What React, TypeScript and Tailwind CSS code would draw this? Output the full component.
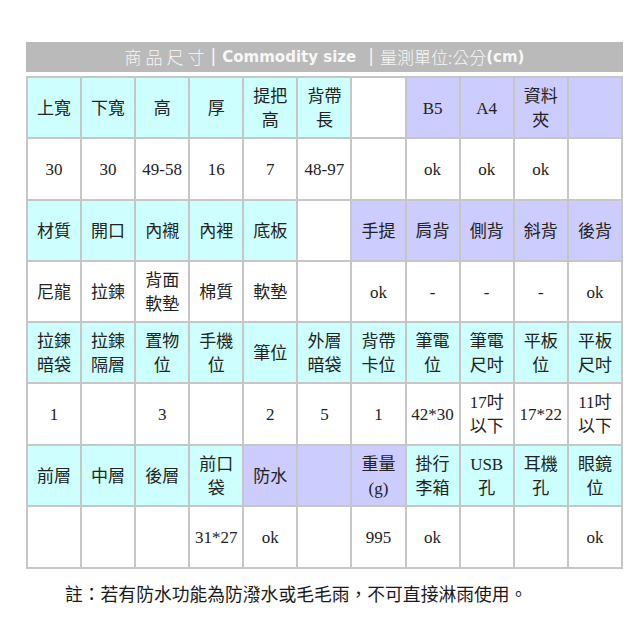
import React from "react";

type Cell = { t: string; c: "c" | "p" | "w" };

const C = (t: string): Cell => ({ t, c: "c" });
const P = (t: string): Cell => ({ t, c: "p" });
const W = (t: string): Cell => ({ t, c: "w" });

const rows: Cell[][] = [
  [C("上寬"), C("下寬"), C("高"), C("厚"), C("提把\n高"), C("背帶\n長"), W(""), P("B5"), P("A4"), P("資料\n夾"), P("")],
  [W("30"), W("30"), W("49-58"), W("16"), W("7"), W("48-97"), W(""), W("ok"), W("ok"), W("ok"), W("")],
  [C("材質"), C("開口"), C("內襯"), C("內裡"), C("底板"), W(""), P("手提"), P("肩背"), P("側背"), P("斜背"), P("後背")],
  [W("尼龍"), W("拉鍊"), W("背面\n軟墊"), W("棉質"), W("軟墊"), W(""), W("ok"), W("-"), W("-"), W("-"), W("ok")],
  [C("拉鍊\n暗袋"), C("拉鍊\n隔層"), C("置物\n位"), C("手機\n位"), C("筆位"), C("外層\n暗袋"), C("背帶\n卡位"), C("筆電\n位"), C("筆電\n尺吋"), C("平板\n位"), C("平板\n尺吋")],
  [W("1"), W(""), W("3"), W(""), W("2"), W("5"), W("1"), W("42*30"), W("17吋\n以下"), W("17*22"), W("11吋\n以下")],
  [C("前層"), C("中層"), C("後層"), C("前口\n袋"), P("防水"), P(""), P("重量\n(g)"), C("掛行\n李箱"), C("USB\n孔"), C("耳機\n孔"), C("眼鏡\n位")],
  [W(""), W(""), W(""), W("31*27"), W("ok"), W(""), W("995"), W("ok"), W(""), W(""), W("ok")],
];

const heights = ["h-[61px]", "h-[62px]", "h-[61px]", "h-[61px]", "h-[61px]", "h-[62px]", "h-[61px]", "h-[62px]"];

const bg = {
  c: "bg-[#ccfffe]",
  p: "bg-[#ccccfe]",
  w: "bg-white",
};

export default function App() {
  return (
    <div className="w-[640px] h-[640px] bg-white pt-[42px] pl-[26px]">
      <div className="w-[597px] h-[30px] bg-[#bababa] flex items-center justify-center text-[#f7f7f7] whitespace-pre">
        <span className="text-[17px] font-['Noto_Sans_CJK_TC',sans-serif] font-light tracking-[4px]">商品尺寸</span>
        <span className="text-[17px] font-['DejaVu_Sans',sans-serif] ml-[2px]">|</span>
        <span className="text-[15px] font-bold font-['DejaVu_Sans',sans-serif] ml-[6px]">Commodity size</span>
        <span className="text-[17px] font-['DejaVu_Sans',sans-serif] ml-[12px]">|</span>
        <span className="text-[17px] font-['Noto_Sans_CJK_TC',sans-serif] font-light ml-[6px]">量測單位:公分</span>
        <span className="text-[15px] font-bold font-['DejaVu_Sans',sans-serif]">(cm)</span>
      </div>
      <table className="mt-[4px] w-[597px] table-fixed border-collapse border-2 border-[#c6c6c6]">
        <tbody>
          {rows.map((row, ri) => (
            <tr key={ri} className={heights[ri]}>
              {row.map((cell, ci) => (
                <td
                  key={ci}
                  className={`${bg[cell.c]} border-2 border-[#c6c6c6] p-0 pt-[2px] text-center align-middle text-[17px] leading-[24px] text-[#222] whitespace-pre-line font-['Liberation_Serif','Noto_Sans_CJK_TC',serif]`}
                >
                  {cell.t}
                </td>
              ))}
            </tr>
          ))}
        </tbody>
      </table>
      <div className="mt-[11px] ml-[39px] text-[17.8px] leading-[26px] text-[#1a1a1a] font-['Noto_Sans_CJK_TC',sans-serif] whitespace-nowrap">
        註：若有防水功能為防潑水或毛毛雨，不可直接淋雨使用。
      </div>
    </div>
  );
}
